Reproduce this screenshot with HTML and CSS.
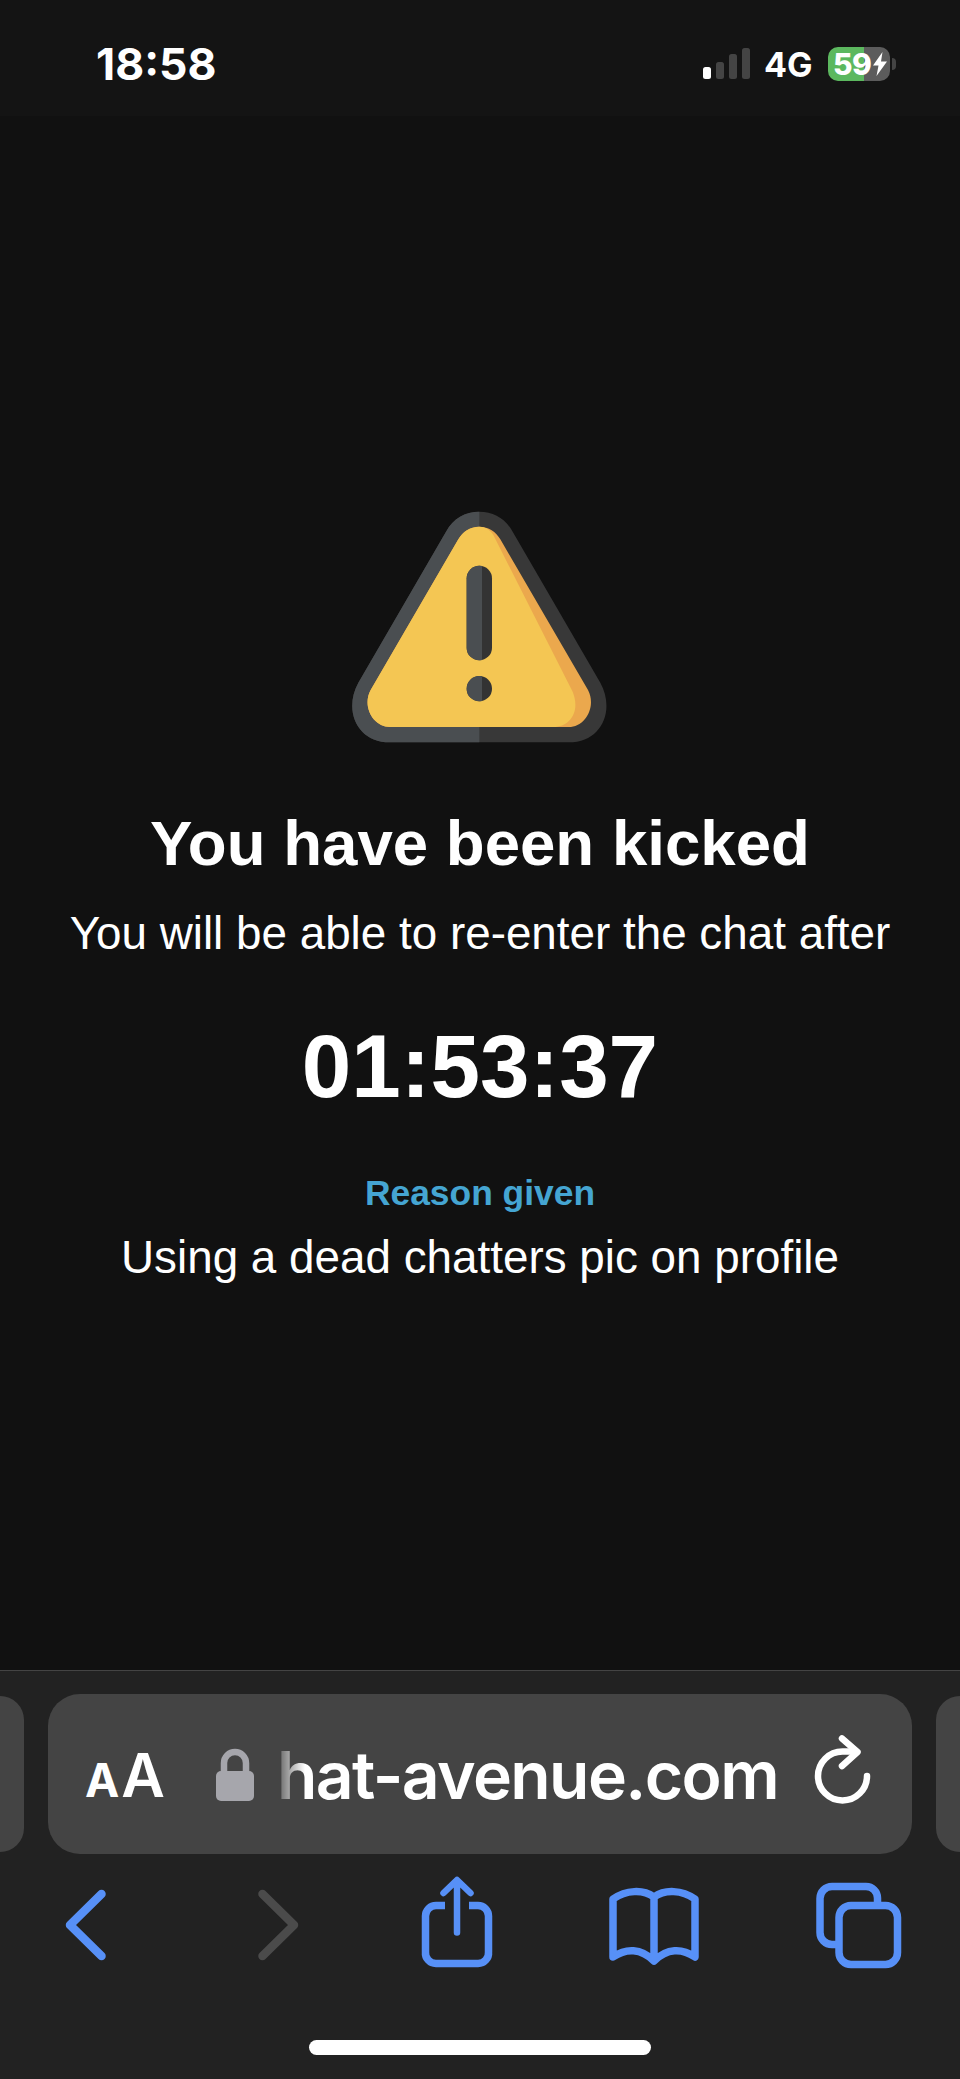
FILE: index.html
```html
<!DOCTYPE html>
<html lang="en">
<head>
<meta charset="utf-8">
<title>You have been kicked</title>
<link rel="stylesheet" href="styles.css">
</head>
<body>
<div class="phone">
  <header class="status">
    <span class="time">18:58</span>
    <div class="status-right">
      <svg class="signal" viewBox="703 48 47 31" width="47" height="31">
        <rect x="703" y="67" width="8" height="12" rx="2.5" fill="#fff"/>
        <rect x="716" y="62" width="8" height="17" rx="2.5" fill="#444"/>
        <rect x="729" y="54" width="8" height="25" rx="2.5" fill="#444"/>
        <rect x="742" y="48" width="8" height="31" rx="2.5" fill="#444"/>
      </svg>
      <span class="net">4G</span>
      <div class="battery">
        <span class="pct">59</span>
        <svg class="bolt" viewBox="0 0 14 24" width="14" height="24"><path d="M9.5 0 0 13.5h5.5L3.5 24 14 9.5H8z" fill="#fff"/></svg>
      </div>
      <span class="nub"></span>
    </div>
  </header>

  <main class="content">
    <svg class="warn" viewBox="0 0 900 780" width="300" height="260">
      <defs>
        <clipPath id="half"><rect x="0" y="0" width="448" height="780"/></clipPath>
        <clipPath id="mark"><rect x="0" y="0" width="456" height="780"/></clipPath>
      </defs>
      <path fill="#383838" d="M448 65C405 65 370 85 348 125L85 578C40 660 80 757 180 757L716 757C816 757 856 660 811 578L548 125C526 85 491 65 448 65Z"/>
      <path fill="#4a4e51" clip-path="url(#half)" d="M448 65C405 65 370 85 348 125L85 578C40 660 80 757 180 757L716 757C816 757 856 660 811 578L548 125C526 85 491 65 448 65Z"/>
      <path fill="#eba84d" d="M448 110C420 110 398 125 385 148L122 600C95 650 130 711 180 711L716 711C766 711 800 650 774 600L511 148C498 125 476 110 448 110Z"/>
      <path fill="#f4c653" d="M448 110C420 110 398 125 385 148L122 600C95 650 130 711 180 711L670 711C720 711 752 665 728 605L490 135C480 118 465 110 448 110Z"/>
      <rect x="410" y="227" width="76" height="284" rx="38" fill="#333"/>
      <circle cx="448" cy="596" r="38" fill="#333"/>
      <g clip-path="url(#mark)" fill="#4a4e51">
        <rect x="410" y="227" width="76" height="284" rx="38"/>
        <circle cx="448" cy="596" r="38"/>
      </g>
    </svg>
    <h1 class="title">You have been kicked</h1>
    <p class="sub">You will be able to re-enter the chat after</p>
    <p class="timer">01:53:37</p>
    <p class="label">Reason given</p>
    <p class="reason">Using a dead chatters pic on profile</p>
  </main>

  <footer class="toolbar">
    <div class="url-row">
      <div class="side-tab"></div>
      <div class="url-bar">
        <div class="aa"><span class="aa-small">A</span><span class="aa-big">A</span></div>
        <svg class="lock" viewBox="216 1747 38 54" width="38" height="54">
          <path d="M224 1774v-11a11 11 0 0 1 22 0v11" fill="none" stroke="#a6a6ac" stroke-width="6.5"/>
          <rect x="216" y="1771" width="38" height="30" rx="5" fill="#a6a6ac"/>
        </svg>
        <span class="url">hat-avenue.com</span>
        <svg class="reload" viewBox="805 1730 76 76" width="76" height="76">
          <path d="M867 1776a24.500 24.500 0 1 1-24.500-24.500h12" fill="none" stroke="#fff" stroke-width="6.500" stroke-linecap="round"/>
          <path d="M842 1738.500l15.500 13.500-15.500 14" fill="none" stroke="#fff" stroke-width="6.500" stroke-linecap="round" stroke-linejoin="round"/>
        </svg>
      </div>
      <div class="side-tab side-tab-right"></div>
    </div>
    <nav class="nav">
      <svg class="back" viewBox="60 1870 50 105" width="50" height="105">
        <path d="M101.500 1894 70 1925l31.500 31" fill="none" stroke="#5790f7" stroke-width="8.500" stroke-linecap="round" stroke-linejoin="round"/>
      </svg>
      <svg class="forward" viewBox="250 1870 50 105" width="50" height="105">
        <path d="M262.500 1894 294 1925l-31.500 31" fill="none" stroke="#4b4b4b" stroke-width="8.500" stroke-linecap="round" stroke-linejoin="round"/>
      </svg>
      <svg class="share" viewBox="415 1870 85 105" width="85" height="105">
        <path d="M445 1905.500h-9a10.500 10.500 0 0 0-10.500 10.500v36a10.500 10.500 0 0 0 10.500 11.500h42a10.500 10.500 0 0 0 10.500-11.500v-36a10.500 10.500 0 0 0-10.500-10.500h-9" fill="none" stroke="#5790f7" stroke-width="7.500"/>
        <path d="M457 1932.500v-52M443.500 1893l13.500-13 13.500 13" fill="none" stroke="#5790f7" stroke-width="6.500" stroke-linecap="round" stroke-linejoin="round"/>
      </svg>
      <svg class="book" viewBox="603 1870 101 105" width="101" height="105">
        <path d="M654 1897c-11-8-28-7-41 2v58c13-9 28-9 41 4 13-13 28-13 41-4v-58c-13-9-30-10-41-2zM654 1897v62" fill="none" stroke="#5790f7" stroke-width="7.500" stroke-linejoin="round" stroke-linecap="round"/>
      </svg>
      <svg class="tabs" viewBox="810 1870 97 105" width="97" height="105">
        <path d="M877.500 1903v-5a11.500 11.500 0 0 0-11.500-11.500h-34a12 12 0 0 0-12 12v34a12 12 0 0 0 12 12h6" fill="none" stroke="#5790f7" stroke-width="7.500"/>
        <rect x="839" y="1905.500" width="58.500" height="59" rx="12" fill="none" stroke="#5790f7" stroke-width="7.500"/>
      </svg>
    </nav>
    <div class="home"></div>
  </footer>
</div>
</body>
</html>
```
FILE: styles.css
```css
* { box-sizing: border-box; }
html, body { margin: 0; padding: 0; background: #111; }
.phone {
  width: 960px;
  height: 2079px;
  display: flex;
  flex-direction: column;
  overflow: hidden;
  color: #fff;
  font-family: "Liberation Sans", Arial, sans-serif;
}

/* status bar */
.status {
  height: 116px;
  flex: none;
  background: #141414;
  display: flex;
  justify-content: space-between;
  padding: 46px 0 0 96px;
}
.time {
  font: 700 44.5px/36px Inter, sans-serif;
}
.status-right {
  display: flex;
  align-items: flex-start;
  width: 257px;
  margin-top: 1px;
}
.signal { margin-top: 1px; display: block; }
.net {
  font: 700 34px/34px Inter, sans-serif;
  margin: 1px 0 0 14px;
  width: 64px;
}
.battery {
  width: 62px;
  height: 34px;
  border-radius: 10px;
  background: linear-gradient(90deg, #5cb85f 36px, #5c5c5c 36px);
  display: flex;
  align-items: center;
  padding-left: 5px;
}
.pct { font: 800 30px/34px Inter, sans-serif; width: 40px; letter-spacing: -.5px; }
.bolt { display: block; }
.nub {
  width: 4px;
  height: 12px;
  margin: 11px 0 0 2px;
  border-radius: 0 6px 6px 0;
  background: #444;
}

/* message */
.content {
  flex: 1;
  display: flex;
  flex-direction: column;
  align-items: center;
  padding-top: 374px;
  background: #111;
}
.warn { display: block; flex: none; }
.title { margin: 61px 0 0; font-size: 63.6px; line-height: 64px; font-weight: 700; }
.sub { margin: 37px 0 0; font-size: 45.8px; line-height: 44px; }
.timer { margin: 66px 0 0; font-size: 89px; line-height: 88px; font-weight: 700; }
.label { margin: 66px 0 0; font-size: 35.4px; line-height: 34px; font-weight: 700; color: #45a5d2; }
.reason { margin: 26px 0 0; font-size: 45.8px; line-height: 44px; }

/* browser toolbar */
.toolbar {
  height: 409px;
  flex: none;
  background: #222;
  border-top: 1px solid #444;
  padding-top: 23px;
}
.url-row { display: flex; justify-content: space-between; height: 160px; }
.side-tab {
  width: 24px;
  height: 156px;
  margin-top: 2px;
  background: #444;
  border-radius: 0 30px 30px 0;
}
.side-tab-right { border-radius: 30px 0 0 30px; }
.url-bar {
  width: 864px;
  height: 160px;
  background: #444;
  border-radius: 32px;
  display: flex;
  align-items: flex-start;
  padding-left: 37px;
}
.aa {
  width: 131px;
  margin-top: 46px;
  display: flex;
  align-items: baseline;
  gap: 2px;
  font-family: Inter, sans-serif;
  font-weight: 700;
  line-height: 70px;
}
.aa-small { font-size: 46px; }
.aa-big { font-size: 60px; font-weight: 600; letter-spacing: -1px; }
.lock { display: block; margin-top: 53px; flex: none; }
.url {
  width: 510px;
  flex: none;
  margin: 41px 0 0 23px;
  font: 600 66px/80px Inter, sans-serif;
  letter-spacing: -1.6px;
  white-space: nowrap;
  -webkit-mask-image: linear-gradient(90deg, rgba(0,0,0,.15) 0, #000 28px);
  mask-image: linear-gradient(90deg, rgba(0,0,0,.15) 0, #000 28px);
}
.reload { display: block; margin: 36px 0 0 18px; flex: none; }

.nav { display: flex; margin-top: 16px; padding-left: 60px; height: 105px; }
.nav svg { display: block; flex: none; }
.forward { margin-left: 140px; }
.share { margin-left: 115px; }
.book { margin-left: 103px; }
.tabs { margin-left: 106px; }
.home {
  width: 342px;
  height: 15px;
  margin: 65px auto 0;
  border-radius: 8px;
  background: #fff;
}
```
